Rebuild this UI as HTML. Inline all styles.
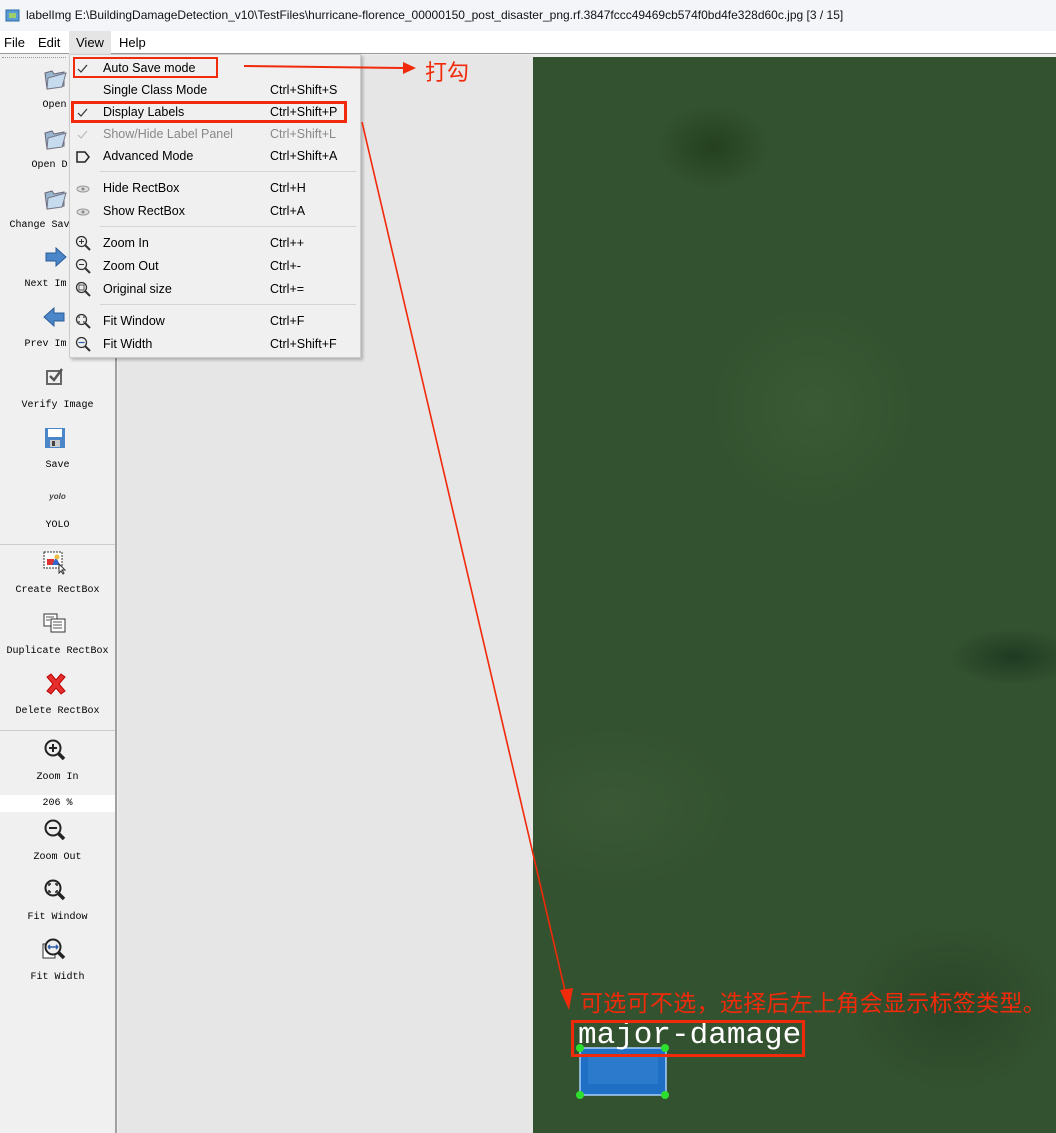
<!DOCTYPE html>
<html><head><meta charset="utf-8">
<style>
*{margin:0;padding:0;box-sizing:border-box}
body{width:1056px;height:1133px;overflow:hidden;position:relative;background:#f0f0f0;font-family:"Liberation Sans","Noto Sans CJK SC",sans-serif}
.abs{position:absolute}
#title{left:0;top:0;width:1056px;height:31px;background:#f3f5f9;font-size:12px;color:#111;line-height:31px;padding-left:26px;white-space:nowrap}
#menubar{left:0;top:31px;width:1056px;height:23px;background:#fff;font-size:13px;color:#000;border-bottom:1px solid #999}
#menubar span{position:absolute;top:4px}
#tool{left:0;top:55px;width:117px;height:1078px;background:#f0f0f0;border-right:2px solid #a0a0a0}
.tb{position:absolute;left:0;width:115px;text-align:center;font-family:"Liberation Mono","Noto Sans CJK SC",monospace;font-size:10px;color:#000}
#canvas{left:118px;top:55px;width:415px;height:1078px;background:#e6e6e6}
#img{left:533px;top:57px;width:523px;height:1076px;
background:radial-gradient(ellipse 80px 60px at 180px 90px,#24401f 0,transparent 70%),radial-gradient(ellipse 90px 40px at 480px 600px,#1f3a22 0,transparent 70%),radial-gradient(ellipse 150px 150px at 280px 350px,#3a5a35 0,transparent 70%),radial-gradient(ellipse 180px 120px at 80px 750px,#3a5835 0,transparent 70%),radial-gradient(ellipse 150px 120px at 420px 950px,#2a4628 0,transparent 70%),#33522f}
#menu{left:69px;top:54px;width:292px;height:304px;background:#f0f0f0;border:1px solid #ccc;box-shadow:2px 2px 3px rgba(0,0,0,.25);font-size:12.5px;color:#000}
.mi{position:absolute;left:33px;white-space:nowrap}
.sc{position:absolute;left:200px;white-space:nowrap}
.sep{position:absolute;left:30px;width:256px;height:1px;background:#d5d5d5}
.ck{position:absolute;left:7px}
.red{position:absolute;border:2px solid #f02a0a}
</style></head><body>
<div id="title" class="abs">labelImg E:\BuildingDamageDetection_v10\TestFiles\hurricane-florence_00000150_post_disaster_png.rf.3847fccc49469cb574f0bd4fe328d60c.jpg [3 / 15]</div>
<svg class="abs" style="left:5px;top:8px" width="15" height="15"><rect x="1" y="2" width="13" height="11" fill="#5a9bd4" stroke="#2d6aa8"/><rect x="4" y="5" width="7" height="5" fill="#9ccf6a"/></svg>
<div id="menubar" class="abs"><span style="left:4px">File</span><span style="left:38px">Edit</span><span style="left:76px">View</span><span style="left:119px">Help</span></div>
<div class="abs" style="left:69px;top:31px;width:42px;height:23px;background:#e5e5e5"></div>
<div class="abs" style="left:76px;top:35px;font-size:13px">View</div>

<div id="tool" class="abs">
<div class="abs" style="left:2px;top:2px;width:64px;border-top:1px dotted #999"></div>
<svg class="abs" style="left:42px;top:10px" width="26" height="26"><path d="M3 8 L10 6 L12 9 L22 7 L22 21 L5 24Z" fill="#9ab6cf" stroke="#667"/><path d="M6 13 L24 8 L20 22 L5 24Z" fill="#c6dcee" stroke="#778"/></svg>
<div class="tb" style="top:45px;left:-3px">Open</div>
<svg class="abs" style="left:42px;top:70px" width="26" height="26"><path d="M3 8 L10 6 L12 9 L22 7 L22 21 L5 24Z" fill="#9ab6cf" stroke="#667"/><path d="M6 13 L24 8 L20 22 L5 24Z" fill="#c6dcee" stroke="#778"/></svg>
<div class="tb" style="top:105px;left:-8px">Open D</div>
<svg class="abs" style="left:42px;top:130px" width="26" height="26"><path d="M3 8 L10 6 L12 9 L22 7 L22 21 L5 24Z" fill="#9ab6cf" stroke="#667"/><path d="M6 13 L24 8 L20 22 L5 24Z" fill="#c6dcee" stroke="#778"/></svg>
<div class="tb" style="top:165px;left:-18px">Change Sav</div>
<svg class="abs" style="left:44px;top:190px" width="24" height="24"><path d="M2 8 H12 V3 L22 12 L12 21 V16 H2Z" fill="#4a86c8" stroke="#2b5c99"/></svg>
<div class="tb" style="top:224px;left:-12px">Next Im</div>
<svg class="abs" style="left:42px;top:250px" width="24" height="24"><path d="M22 8 H12 V3 L2 12 L12 21 V16 H22Z" fill="#4a86c8" stroke="#2b5c99"/></svg>
<div class="tb" style="top:284px;left:-12px">Prev Im</div>
<svg class="abs" style="left:45px;top:312px" width="20" height="20"><rect x="2" y="4" width="14" height="13" fill="none" stroke="#666" stroke-width="2"/><path d="M5 9 L9 13 L17 2" fill="none" stroke="#555" stroke-width="2.5"/></svg>
<div class="tb" style="top:345px">Verify Image</div>
<svg class="abs" style="left:44px;top:372px" width="22" height="22"><rect x="1" y="1" width="20" height="20" fill="#4a86c8"/><rect x="4" y="2" width="14" height="8" fill="#fff"/><rect x="6" y="13" width="10" height="7" fill="#ccc"/><rect x="8" y="14" width="3" height="5" fill="#444"/></svg>
<div class="tb" style="top:405px">Save</div>
<div class="tb" style="top:437px;font-family:'Liberation Sans',sans-serif;font-style:italic;font-weight:bold;font-size:8px;color:#444">yolo</div>
<div class="tb" style="top:465px">YOLO</div>
<div class="abs" style="left:0;top:489px;width:115px;height:1px;background:#ccc"></div>
<svg class="abs" style="left:43px;top:496px" width="24" height="24"><rect x="1" y="1" width="18" height="16" fill="#fff" stroke="#333" stroke-dasharray="2,1"/><rect x="4" y="8" width="7" height="6" fill="#d33"/><path d="M9 14 L13 6 L17 14Z" fill="#36c"/><circle cx="14" cy="6" r="2.5" fill="#eb4"/><path d="M16 13 L16 22 L18 20 L20 23 L21 22 L19 19 L22 19Z" fill="#fff" stroke="#333"/></svg>
<div class="tb" style="top:530px">Create RectBox</div>
<svg class="abs" style="left:43px;top:557px" width="24" height="24"><rect x="1" y="2" width="13" height="12" fill="#fff" stroke="#333"/><rect x="8" y="7" width="14" height="13" fill="#fff" stroke="#333"/><path d="M10 10h9M10 13h9M10 16h9M3 5h8M3 8h4" stroke="#555"/></svg>
<div class="tb" style="top:591px">Duplicate RectBox</div>
<svg class="abs" style="left:44px;top:617px" width="24" height="24"><path d="M3 5 L7 2 L12 8 L17 2 L21 5 L15 12 L21 19 L17 22 L12 16 L7 22 L3 19 L9 12Z" fill="#e63030" stroke="#b00"/></svg>
<div class="tb" style="top:651px">Delete RectBox</div>
<div class="abs" style="left:0;top:675px;width:115px;height:1px;background:#ccc"></div>
<svg class="abs" style="left:43px;top:683px" width="24" height="24"><circle cx="10" cy="10" r="7.5" fill="#eee" stroke="#222" stroke-width="2"/><path d="M6 10h8M10 6v8" stroke="#222" stroke-width="2"/><path d="M15 15 L21 21" stroke="#222" stroke-width="3.5"/></svg>
<div class="tb" style="top:717px">Zoom In</div>
<div class="abs" style="left:0;top:740px;width:115px;height:17px;background:#fff;font-size:10px;text-align:center;line-height:17px;font-family:'Liberation Mono',monospace">206 %</div>
<svg class="abs" style="left:43px;top:763px" width="24" height="24"><circle cx="10" cy="10" r="7.5" fill="#eee" stroke="#222" stroke-width="2"/><path d="M6 10h8" stroke="#222" stroke-width="2"/><path d="M15 15 L21 21" stroke="#222" stroke-width="3.5"/></svg>
<div class="tb" style="top:797px">Zoom Out</div>
<svg class="abs" style="left:43px;top:823px" width="24" height="24"><circle cx="10" cy="10" r="7.5" fill="#eee" stroke="#222" stroke-width="2"/><path d="M6 8V6h2M12 6h2v2M14 12v2h-2M8 14H6v-2" stroke="#222" stroke-width="1.5" fill="none"/><path d="M15 15 L21 21" stroke="#222" stroke-width="3.5"/></svg>
<div class="tb" style="top:857px">Fit Window</div>
<svg class="abs" style="left:42px;top:883px" width="24" height="24"><rect x="1" y="6" width="12" height="14" fill="#fff" stroke="#333"/><circle cx="11" cy="9" r="7.5" fill="#eee" stroke="#222" stroke-width="2"/><path d="M6 9h10M6 9l2-2M6 9l2 2M16 9l-2-2M16 9l-2 2" stroke="#2a5ca8" stroke-width="1.5"/><path d="M16 14 L22 20" stroke="#222" stroke-width="3.5"/></svg>
<div class="tb" style="top:917px">Fit Width</div>
</div>

<div id="canvas" class="abs"></div>
<div id="img" class="abs"></div>

<div id="menu" class="abs">
<svg class="ck" style="top:9px" width="12" height="10"><path d="M1 5 L4 8 L10 1" fill="none" stroke="#333" stroke-width="1.2"/></svg><div class="mi" style="top:6px">Auto Save mode</div>
<div class="mi" style="top:28px">Single Class Mode</div><div class="sc" style="top:28px">Ctrl+Shift+S</div>
<svg class="ck" style="top:53px" width="12" height="10"><path d="M1 5 L4 8 L10 1" fill="none" stroke="#333" stroke-width="1.2"/></svg><div class="mi" style="top:50px">Display Labels</div><div class="sc" style="top:50px">Ctrl+Shift+P</div>
<svg class="ck" style="top:75px" width="12" height="10"><path d="M1 5 L4 8 L10 1" fill="none" stroke="#bbb" stroke-width="1.2"/></svg><div class="mi" style="top:72px;color:#888">Show/Hide Label Panel</div><div class="sc" style="top:72px;color:#888">Ctrl+Shift+L</div>
<svg class="abs" style="left:6px;top:96px" width="14" height="12"><path d="M1 1h8l4 5-4 5H1z" fill="none" stroke="#222" stroke-width="1.5"/></svg>
<div class="mi" style="top:94px">Advanced Mode</div><div class="sc" style="top:94px">Ctrl+Shift+A</div>
<div class="sep" style="top:116px"></div>
<svg class="abs" style="left:6px;top:130px" width="14" height="8"><ellipse cx="7" cy="4" rx="6" ry="3" fill="#ddd" stroke="#999"/><circle cx="7" cy="4" r="1.5" fill="#888"/></svg><div class="mi" style="top:126px">Hide RectBox</div><div class="sc" style="top:126px">Ctrl+H</div>
<svg class="abs" style="left:6px;top:153px" width="14" height="8"><ellipse cx="7" cy="4" rx="6" ry="3" fill="#ddd" stroke="#999"/><circle cx="7" cy="4" r="1.5" fill="#888"/></svg><div class="mi" style="top:149px">Show RectBox</div><div class="sc" style="top:149px">Ctrl+A</div>
<div class="sep" style="top:171px"></div>
<svg class="abs" style="left:5px;top:180px" width="16" height="16"><circle cx="6.5" cy="6.5" r="5" fill="#eee" stroke="#333" stroke-width="1.3"/><path d="M4 6.5h5M6.5 4v5" stroke="#333"/><path d="M10 10l5 5" stroke="#333" stroke-width="2"/></svg>
<div class="mi" style="top:181px">Zoom In</div><div class="sc" style="top:181px">Ctrl++</div>
<svg class="abs" style="left:5px;top:203px" width="16" height="16"><circle cx="6.5" cy="6.5" r="5" fill="#eee" stroke="#333" stroke-width="1.3"/><path d="M4 6.5h5" stroke="#333"/><path d="M10 10l5 5" stroke="#333" stroke-width="2"/></svg>
<div class="mi" style="top:204px">Zoom Out</div><div class="sc" style="top:204px">Ctrl+-</div>
<svg class="abs" style="left:5px;top:226px" width="16" height="16"><circle cx="6.5" cy="6.5" r="5" fill="#eee" stroke="#333" stroke-width="1.3"/><rect x="4" y="4" width="5" height="5" fill="none" stroke="#333" stroke-width=".8"/><path d="M10 10l5 5" stroke="#333" stroke-width="2"/></svg>
<div class="mi" style="top:227px">Original size</div><div class="sc" style="top:227px">Ctrl+=</div>
<div class="sep" style="top:249px"></div>
<svg class="abs" style="left:5px;top:258px" width="16" height="16"><circle cx="6.5" cy="6.5" r="5" fill="#eee" stroke="#333" stroke-width="1.3"/><path d="M4 5V4h1M8 4h1v1M9 8v1H8M5 9H4V8" stroke="#333" fill="none"/><path d="M10 10l5 5" stroke="#333" stroke-width="2"/></svg>
<div class="mi" style="top:259px">Fit Window</div><div class="sc" style="top:259px">Ctrl+F</div>
<svg class="abs" style="left:5px;top:281px" width="16" height="16"><circle cx="6.5" cy="6.5" r="5" fill="#eee" stroke="#333" stroke-width="1.3"/><path d="M3.5 6.5h6" stroke="#2a5ca8" stroke-width="1.2"/><path d="M10 10l5 5" stroke="#333" stroke-width="2"/></svg>
<div class="mi" style="top:282px">Fit Width</div><div class="sc" style="top:282px">Ctrl+Shift+F</div>
</div>

<div class="red" style="left:73px;top:57px;width:145px;height:21px"></div>
<div class="red" style="left:71px;top:101px;width:276px;height:22px;border-width:3px"></div>

<svg class="abs" style="left:0;top:0" width="1056" height="1133">
<path d="M244 66 L405 68" stroke="#f02a0a" stroke-width="2"/>
<path d="M403 62 L416 68 L403 74Z" fill="#f02a0a"/>
<path d="M362 122 L566 995" stroke="#f02a0a" stroke-width="1.6"/>
<path d="M560 990 L569 1010 L573 988Z" fill="#f02a0a"/>
<rect x="580" y="1048" width="86" height="47" fill="#1f6fc4" stroke="#a9d0ff" stroke-width="1.5"/>
<rect x="588" y="1054" width="70" height="30" fill="#3a86d4" opacity=".5"/>
<circle cx="580" cy="1048" r="4" fill="#2ee02e"/><circle cx="665" cy="1048" r="4" fill="#2ee02e"/>
<circle cx="580" cy="1095" r="4" fill="#2ee02e"/><circle cx="665" cy="1095" r="4" fill="#2ee02e"/>
</svg>
<div class="abs" style="left:425px;top:55px;font-size:22px;color:#f02a0a;font-family:'Noto Sans CJK SC',sans-serif">打勾</div>
<div class="abs" style="left:580px;top:984px;font-size:23px;color:#f02a0a;font-family:'Noto Sans CJK SC',sans-serif;white-space:nowrap;letter-spacing:0.3px">可选可不选，选择后左上角会显示标签类型。</div>
<div class="abs" style="left:578px;top:1018px;font-size:31px;color:#fff;font-family:'Liberation Mono',monospace;white-space:nowrap">major-damage</div>
<div class="red" style="left:571px;top:1020px;width:234px;height:37px;border-width:3px"></div>
</body></html>
